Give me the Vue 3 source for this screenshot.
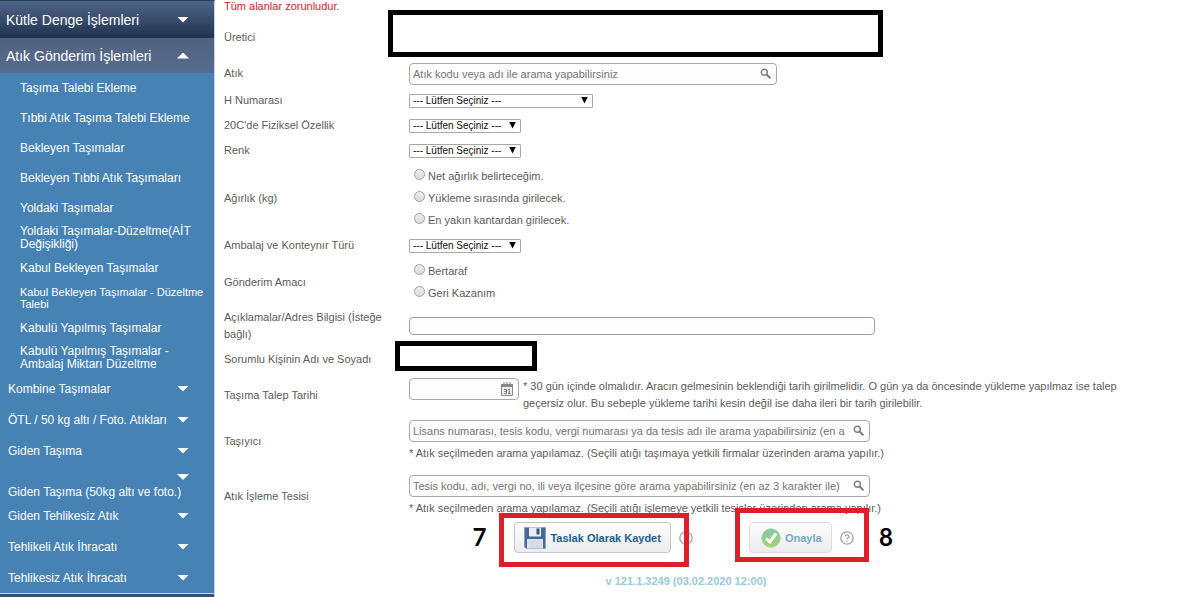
<script setup>
import { ref } from "vue";

const subMenu = [
  { text: "Taşıma Talebi Ekleme" },
  { text: "Tıbbi Atık Taşıma Talebi Ekleme" },
  { text: "Bekleyen Taşımalar" },
  { text: "Bekleyen Tıbbi Atık Taşımaları" },
  { text: "Yoldaki Taşımalar" },
  { text: "Yoldaki Taşımalar-Düzeltme(AİT Değişikliği)" },
  { text: "Kabul Bekleyen Taşımalar" },
  { text: "Kabul Bekleyen Taşımalar - Düzeltme Talebi", small: true },
  { text: "Kabulü Yapılmış Taşımalar" },
  { text: "Kabulü Yapılmış Taşımalar - Ambalaj Miktarı Düzeltme" },
];

const menu = [
  { text: "Kombine Taşımalar" },
  { text: "ÖTL / 50 kg altı / Foto. Atıkları" },
  { text: "Giden Taşıma" },
  { text: "Giden Taşıma (50kg altı ve foto.)", tall: true },
  { text: "Giden Tehlikesiz Atık" },
  { text: "Tehlikeli Atık İhracatı" },
  { text: "Tehlikesiz Atık İhracatı" },
];

const weightOptions = [
  "Net ağırlık belirteceğim.",
  "Yükleme sırasında girilecek.",
  "En yakın kantardan girilecek.",
];
const purposeOptions = ["Bertaraf", "Geri Kazanım"];

const weight = ref("");
const purpose = ref("");
</script>

<template>
  <div class="page">
    <nav class="sidebar">
      <a href="#" class="head">Kütle Denge İşlemleri<i class="arrow"></i></a>
      <a href="#" class="head open">Atık Gönderim İşlemleri<i class="arrow up"></i></a>
      <a
        v-for="item in subMenu"
        :key="item.text"
        href="#"
        class="sub"
        :class="{ small: item.small }"
      ><span>{{ item.text }}</span></a>
      <a
        v-for="item in menu"
        :key="item.text"
        href="#"
        class="item"
        :class="{ tall: item.tall }"
      >{{ item.text }}<i class="arrow"></i></a>
      <div class="sidebar-end"></div>
    </nav>

    <main class="content">
      <p class="required">Tüm alanlar zorunludur.</p>

      <div class="row producer">
        <span class="label">Üretici</span>
        <div class="field"><div class="mask mask-producer"></div></div>
      </div>

      <div class="row waste">
        <label class="label" for="waste">Atık</label>
        <div class="field">
          <div class="search medium">
            <input id="waste" type="text" placeholder="Atık kodu veya adı ile arama yapabilirsiniz" />
            <svg class="lens" viewBox="0 0 12 12"><circle cx="4.3" cy="4.3" r="3" /><path d="M6.6 6.6L10.4 10.2" /></svg>
          </div>
        </div>
      </div>

      <div class="row">
        <label class="label" for="hnum">H Numarası</label>
        <div class="field">
          <div class="select wide"><select id="hnum"><option>--- Lütfen Seçiniz ---</option></select></div>
        </div>
      </div>

      <div class="row">
        <label class="label" for="physical">20C'de Fiziksel Özellik</label>
        <div class="field">
          <div class="select"><select id="physical"><option>--- Lütfen Seçiniz ---</option></select></div>
        </div>
      </div>

      <div class="row">
        <label class="label" for="color">Renk</label>
        <div class="field">
          <div class="select"><select id="color"><option>--- Lütfen Seçiniz ---</option></select></div>
        </div>
      </div>

      <div class="row radios" role="radiogroup" aria-labelledby="weight-label">
        <span id="weight-label" class="label">Ağırlık (kg)</span>
        <div class="field">
          <label v-for="opt in weightOptions" :key="opt" class="radio">
            <input v-model="weight" type="radio" name="weight" :value="opt" />{{ opt }}
          </label>
        </div>
      </div>

      <div class="row">
        <label class="label" for="package">Ambalaj ve Konteynır Türü</label>
        <div class="field">
          <div class="select"><select id="package"><option>--- Lütfen Seçiniz ---</option></select></div>
        </div>
      </div>

      <div class="row radios" role="radiogroup" aria-labelledby="purpose-label">
        <span id="purpose-label" class="label">Gönderim Amacı</span>
        <div class="field">
          <label v-for="opt in purposeOptions" :key="opt" class="radio">
            <input v-model="purpose" type="radio" name="purpose" :value="opt" />{{ opt }}
          </label>
        </div>
      </div>

      <div class="row description">
        <label class="label" for="description">Açıklamalar/Adres Bilgisi (İsteğe bağlı)</label>
        <div class="field"><input id="description" class="plain" type="text" /></div>
      </div>

      <div class="row person">
        <span class="label">Sorumlu Kişinin Adı ve Soyadı</span>
        <div class="field"><div class="mask mask-person"></div></div>
      </div>

      <div class="row tall-row">
        <label class="label" for="date">Taşıma Talep Tarihi</label>
        <div class="field date-field">
          <div class="search date">
            <input id="date" type="text" />
            <svg class="calendar" viewBox="0 0 12 14">
              <path d="M0.5 2.5H11.5V13.5H0.5Z" fill="#eee" stroke="#888" />
              <path d="M0 2H12V5H0Z" fill="#888" />
              <path d="M3 0V3M6 0V3M9 0V3" stroke="#888" />
              <path d="M3 7.5H5.5V11.5M3.3 9.5H5.5M2.8 11.5H5.5M8.3 7V12M7.3 7.7L8.3 7M7 11.6H9.6" fill="none" stroke="#777" />
            </svg>
          </div>
          <p class="hint">* 30 gün içinde olmalıdır. Aracın gelmesinin beklendiği tarih girilmelidir. O gün ya da öncesinde yükleme yapılmaz ise talep geçersiz olur. Bu sebeple yükleme tarihi kesin değil ise daha ileri bir tarih girilebilir.</p>
        </div>
      </div>

      <div class="row tall-row">
        <label class="label" for="carrier">Taşıyıcı</label>
        <div class="field">
          <div class="search large">
            <input id="carrier" type="text" placeholder="Lisans numarası, tesis kodu, vergi numarası ya da tesis adı ile arama yapabilirsiniz (en az 3 karakter ile)" />
            <svg class="lens" viewBox="0 0 12 12"><circle cx="4.3" cy="4.3" r="3" /><path d="M6.6 6.6L10.4 10.2" /></svg>
          </div>
          <p class="hint below">* Atık seçilmeden arama yapılamaz. (Seçili atığı taşımaya yetkili firmalar üzerinden arama yapılır.)</p>
        </div>
      </div>

      <div class="row tall-row facility">
        <label class="label" for="facility">Atık İşleme Tesisi</label>
        <div class="field">
          <div class="search large">
            <input id="facility" type="text" placeholder="Tesis kodu, adı, vergi no, ili veya ilçesine göre arama yapabilirsiniz (en az 3 karakter ile)" />
            <svg class="lens" viewBox="0 0 12 12"><circle cx="4.3" cy="4.3" r="3" /><path d="M6.6 6.6L10.4 10.2" /></svg>
          </div>
          <p class="hint below">* Atık seçilmeden arama yapılamaz. (Seçili atığı işlemeye yetkili tesisler üzerinden arama yapılır.)</p>
        </div>
      </div>

      <div class="actions">
        <div class="action">
          <button type="button" class="save">
            <svg class="floppy" viewBox="0 0 22 22">
              <path d="M0.5 0.5H21.5V21.5H2L0.5 20Z" fill="#47689b" stroke="#8ba0c0" />
              <path d="M5 0.5H17V9.5H5Z" fill="#e9eef5" />
              <path d="M12.5 1.5H15.5V7.5H12.5Z" fill="#35547f" />
              <path d="M3 12H19V21.5H3Z" fill="#dce2ea" />
              <path d="M5 14.5H17M5 17H17M5 19.5H17" stroke="#cdd4dd" />
            </svg>
            Taslak Olarak Kaydet
          </button>
          <svg class="help" viewBox="0 0 14 14"><circle cx="7" cy="7" r="6.2" /><path d="M5.2 5.6C5.2 3.3 8.9 3.4 8.9 5.4C8.9 6.7 7 6.7 7 8.3M7 9.5V10.8" /></svg>
          <div class="frame frame-save"></div>
          <span class="step step-save">7</span>
        </div>
        <div class="action">
          <button type="button" class="confirm">
            <svg class="check" viewBox="0 0 20 20">
              <defs>
                <linearGradient id="green" x1="0" y1="0" x2="0" y2="1">
                  <stop offset="0" stop-color="#80cba0" />
                  <stop offset="1" stop-color="#a5d36d" />
                </linearGradient>
              </defs>
              <circle cx="10" cy="10" r="9.2" fill="url(#green)" stroke="#a9cfb0" />
              <path d="M5 10.5L8.8 14L15 5.5" fill="none" stroke="#fff" stroke-width="3" />
            </svg>
            Onayla
          </button>
          <svg class="help" viewBox="0 0 14 14"><circle cx="7" cy="7" r="6.2" /><path d="M5.2 5.6C5.2 3.3 8.9 3.4 8.9 5.4C8.9 6.7 7 6.7 7 8.3M7 9.5V10.8" /></svg>
          <div class="frame frame-confirm"></div>
          <span class="step step-confirm">8</span>
        </div>
      </div>

      <footer class="version">v 121.1.3249 (03.02.2020 12:00)</footer>
    </main>
  </div>
</template>

<style>
body {
  margin: 0;
  background: #fff;
}
</style>

<style scoped>
* {
  box-sizing: border-box;
}

.page {
  display: flex;
  font-family: "Liberation Sans", Arial, sans-serif;
  font-size: 11px;
  color: #5c5c5c;
}

/* sol menü */
.sidebar {
  display: flex;
  flex-direction: column;
  flex: 0 0 215px;
  min-height: 100vh;
  background: #4682b4;
  border-top: 1px solid #24424f;
  border-right: 1px solid #c4d4e4;
}

.sidebar a {
  display: flex;
  align-items: center;
  position: relative;
  color: #fff;
  text-decoration: none;
}

.sidebar .head {
  height: 37px;
  padding-left: 6px;
  font-size: 14px;
  background: linear-gradient(#4f6587, #20324f);
}

.sidebar .head.open {
  height: 35px;
  background: linear-gradient(#52627f, #566b8f);
}

.sidebar .sub {
  min-height: 30px;
  padding: 0 8px 0 20px;
  font-size: 12px;
  line-height: 13px;
}

.sidebar .small {
  font-size: 11px;
  line-height: 12px;
}

.sidebar .item {
  min-height: 31px;
  padding-left: 8px;
  font-size: 12px;
}

.sidebar .tall {
  min-height: 34px;
  padding-bottom: 1px;
  align-items: flex-end;
}

.arrow {
  position: absolute;
  right: 25px;
  top: 50%;
  width: 12px;
  height: 6px;
  margin-top: -3px;
  background: #fff;
  clip-path: polygon(0 0, 100% 0, 50% 100%);
}

.arrow.up {
  clip-path: polygon(50% 0, 100% 100%, 0 100%);
}

.tall .arrow {
  top: 11px;
}

.sidebar-end {
  flex: 1;
  border-top: 1px solid #c4d4e4;
  background: #34517a;
}

/* form */
.content {
  flex: 1;
  min-width: 0;
  padding: 0 48px 0 9px;
}

.required {
  height: 13px;
  margin: 0;
  line-height: 12px;
  color: #d8232a;
}

.row {
  display: grid;
  grid-template-columns: 185px 1fr;
  align-items: center;
  min-height: 25px;
}

.producer {
  min-height: 48px;
}

.waste {
  margin-bottom: 2px;
}

.radios {
  padding: 2px 0;
}

.description {
  min-height: 40px;
}

.person {
  min-height: 26px;
}

.tall-row {
  min-height: 46px;
}

.facility {
  margin-top: 9px;
}

.label {
  padding-right: 8px;
  line-height: 17px;
}

.field {
  position: relative;
  min-width: 0;
}

input,
select,
button {
  font-family: inherit;
}

.search {
  position: relative;
  height: 22px;
}

.medium {
  max-width: 368px;
}

.large {
  max-width: 461px;
}

.search input,
.plain {
  display: block;
  width: 100%;
  height: 22px;
  padding: 0 24px 0 3px;
  border: 1px solid #a9a9a9;
  border-radius: 4px;
  background: #fdfdfd;
  font-size: 11px;
  color: #5c5c5c;
  outline: none;
}

.plain {
  max-width: 466px;
  height: 18px;
  border-color: #8ea2b4;
}

.search input::placeholder {
  color: #757575;
  opacity: 1;
}

.lens {
  position: absolute;
  right: 5px;
  top: 5px;
  width: 12px;
  height: 12px;
  fill: none;
  stroke: #7d7d7d;
  stroke-width: 2;
}

.lens circle {
  stroke-width: 1.4;
}

.select {
  position: relative;
  width: 112px;
}

.select.wide {
  width: 184px;
}

.select select {
  display: block;
  width: 100%;
  height: 14px;
  padding: 0 0 0 3px;
  border: 1px solid #a9a9a9;
  border-radius: 1px;
  background: #fff;
  font-size: 10px;
  line-height: 12px;
  color: #111;
  appearance: none;
}

.select::after {
  content: "";
  position: absolute;
  right: 5px;
  top: 3px;
  width: 7px;
  height: 7px;
  background: #000;
  clip-path: polygon(0 0, 100% 0, 50% 100%);
  pointer-events: none;
}

.radio {
  display: flex;
  align-items: center;
  height: 22px;
  padding-left: 5px;
}

.radio input {
  width: 11px;
  height: 11px;
  margin: 0 3px 4px 0;
  border: 1px solid #a0a0a0;
  border-radius: 50%;
  background: linear-gradient(#eee, #dadada);
  appearance: none;
}

.radio input:checked {
  background: #555;
}

.date-field {
  display: flex;
  gap: 4px;
}

.date {
  flex: 0 0 110px;
}

.calendar {
  position: absolute;
  right: 6px;
  top: 4px;
  width: 12px;
  height: 14px;
}

.hint {
  margin: 0;
  line-height: 17px;
}

.below {
  margin-top: 3px;
}

/* işaretleme kutuları */
.mask {
  position: absolute;
  border: 5px solid #000;
  background: #fff;
}

.mask-producer {
  left: -21px;
  top: -27px;
  width: 495px;
  height: 47px;
}

.mask-person {
  left: -14px;
  top: -18px;
  width: 142px;
  height: 30px;
}

.frame {
  position: absolute;
  height: 54px;
  border: 5px solid #dc1f2a;
  pointer-events: none;
}

.frame-save {
  left: -15px;
  top: -9px;
  width: 190px;
}

.frame-confirm {
  left: -14px;
  top: -14px;
  width: 134px;
}

.step {
  position: absolute;
  top: 0;
  font-family: Lato, sans-serif;
  font-size: 24px;
  font-weight: 700;
  line-height: 30px;
  color: #000;
}

.step-save {
  left: -42px;
}

.step-confirm {
  left: 130px;
}

.actions {
  display: flex;
  justify-content: center;
  gap: 56px;
  margin-top: 3px;
  padding-right: 8px;
}

.action {
  display: flex;
  align-items: center;
  gap: 8px;
  position: relative;
}

.action button {
  display: flex;
  align-items: center;
  gap: 4px;
  height: 31px;
  padding: 0 9px;
  border: 1px solid #c3c6ca;
  border-radius: 4px;
  background: linear-gradient(#fdfdfd, #ececee);
  font-size: 11px;
  font-weight: 700;
  color: #21618c;
}

.action .confirm {
  padding: 0 9px 0 11px;
  border-color: #dcdee2;
  color: #75aac6;
}

.floppy {
  width: 22px;
  height: 22px;
}

.check {
  width: 20px;
  height: 20px;
}

.help {
  width: 14px;
  height: 14px;
  fill: none;
  stroke: #a3a3a3;
  stroke-width: 1.3;
}

.version {
  margin-top: 20px;
  padding-right: 4px;
  font-weight: 700;
  line-height: 16px;
  text-align: center;
  color: #97cadb;
}
</style>
